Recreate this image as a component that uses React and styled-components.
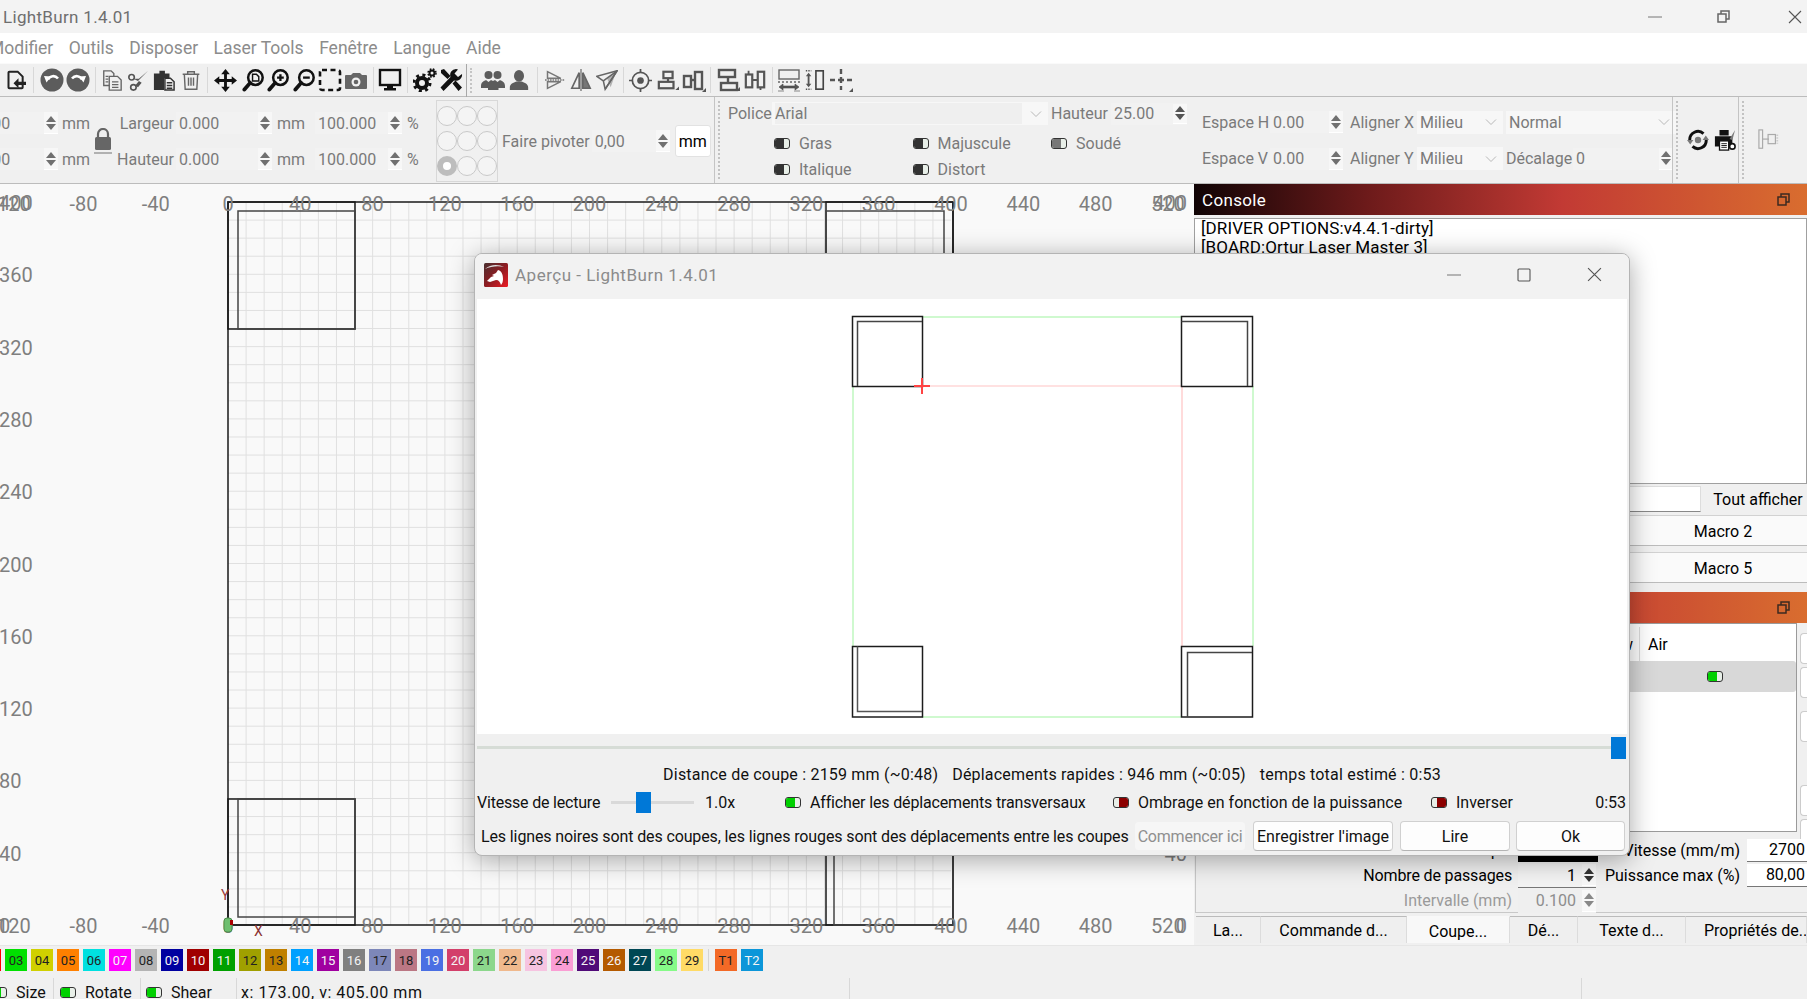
import React from 'react';
import styled, { createGlobalStyle } from 'styled-components';

const FONT = `Roboto, "Liberation Sans", sans-serif`;

const Global = createGlobalStyle`
  html, body { margin: 0; padding: 0; background: #f0f0f0; }
  * { box-sizing: border-box; }
`;

const Root = styled.div`
  position: relative; width: 1807px; height: 999px; overflow: hidden;
  display: flex; flex-direction: column; background: #f0f0f0;
  font-family: ${FONT}; font-size: 16px; color: #000;
`;

/* ---------- Title & menu ---------- */
const TitleBar = styled.div`
  height: 33px; flex: none; display: flex; align-items: center; background: #f3f3f3;
  color: #6e6e6e; padding-left: 3px; font-size: 17px; letter-spacing: .32px;
`;
const TitleText = styled.div`flex: 1;`;
const WinButtons = styled.div`display: flex; align-items: center; color: ${p => p.$color || '#777'};`;
const WinButton = styled.div`
  width: ${p => p.$w}px; margin-left: ${p => p.$ml || 0}px; display: flex; justify-content: center; align-items: center;
`;
const MenuBar = styled.div`
  height: 30px; flex: none; display: flex; align-items: center; gap: 15.5px; background: #fff;
  color: #8c8c8c; overflow: hidden; font-size: 17.5px;
`;
const MenuFirst = styled.span`margin-left: -11px;`;

/* ---------- Toolbar ---------- */
const ToolBar = styled.div`
  height: 34px; flex: none; display: flex; align-items: center; padding-left: 5px;
  background: #f0f0f0; border-bottom: 1px solid #bcbcbc; border-top: 1px solid #fafafa;
`;
const Tool = styled.div`
  width: ${p => p.$w}px; height: 24px; flex: none; display: flex; justify-content: center; align-items: center;
  color: ${p => p.$c || '#111'};
  svg { display: block; }
`;
const ToolSep = styled.div`
  width: ${p => p.$w}px; height: 26px; flex: none; display: flex; justify-content: center;
  &::before { content: ''; width: 1px; background: #d8d8d8; }
`;
const ToolHandle = styled.div`
  width: 17px; height: 33px; flex: none; display: flex; gap: 3px; padding-left: 3px;
  &::before { content: ''; width: 1px; background: #a8a8a8; }
  &::after { content: ''; margin: 4px 0; width: 2px; border-left: 2px dotted #c4c4c4; }
`;

/* ---------- Properties bar ---------- */
const PropBar = styled.div`
  height: 87px; flex: none; display: flex; background: #f0f0f0; border-bottom: 1px solid #bcbcbc;
  color: #7a7a7a; font-size: 16px;
`;
const PropGrid = styled.div`
  width: 714px; flex: none; display: grid; padding-top: 8px; overflow: hidden;
  grid-template-columns: 58px 34px 22px 61px 99px 36px 95px 25px 70px 214px;
  grid-template-rows: 36px 36px;
  align-items: center;
`;
const GridCell = styled.div`
  display: flex; align-items: center; justify-content: ${p => p.$justify || 'flex-start'};
  grid-column: ${p => p.$col}; grid-row: ${p => p.$row};
  padding-left: ${p => p.$pl || 0}px; padding-right: ${p => p.$pr || 0}px;
`;
const Field = styled.div`
  width: ${p => p.$w}px; flex: none; height: 22px; margin-left: ${p => p.$ml || 0}px;
  display: flex; align-items: center; justify-content: space-between;
  background: #f2f2f2; padding-left: 3px; color: #7a7a7a;
`;
const Spin = styled.div`
  width: 14px; height: ${p => p.$h || 22}px; flex: none; display: flex; flex-direction: column; justify-content: center; gap: 2px;
  align-items: center; background: #f7f7f7; border-bottom: 1px solid #fff;
  &::before, &::after { content: ''; width: 0; height: 0; border-left: 5px solid transparent; border-right: 5px solid transparent; }
  &::before { border-bottom: 6px solid ${p => p.$color || '#707070'}; }
  &::after { border-top: 6px solid ${p => p.$color || '#707070'}; }
`;
const RadioBox = styled.div`
  width: 62px; height: 82px; margin-left: 6px; border: 1px solid #d8d8d8; display: grid;
  grid-template-columns: repeat(3, 20px); grid-auto-rows: 20px; row-gap: 5px; padding: 5px 0 0 0; justify-content: center;
`;
const Radio = styled.div`
  width: 20px; height: 20px; border-radius: 50%; background: ${p => (p.$on ? '#fff' : '#f4f4f4')};
  border: ${p => (p.$on ? '6px solid #bdbdbd' : '1px solid #c9c9c9')};
`;
const UnitButton = styled.div`
  width: 36px; height: 32px; margin-left: 5px; background: #fff; border: 1px solid #e2e2e2; border-radius: 3px;
  color: #000; display: flex; align-items: center; justify-content: center;
`;
const GroupSep = styled.div`
  width: 6px; flex: none; border-left: 1px solid #c4c4c4; position: relative;
  &::after { content: ''; display: block; width: 0; height: 78px; margin: 4px 0 0 3px; border-left: 2px dotted #c2c2c2; }
`;
const FontGroup = styled.div`width: 470px; flex: none; padding: 5px 0 0 8px;`;
const FontRow = styled.div`display: flex; align-items: center; height: 23px;`;
const FontLabel = styled.div`width: ${p => p.$w}px; flex: none; margin-left: ${p => p.$ml || 0}px; white-space: nowrap;`;
const Combo = styled.div`
  width: ${p => p.$w}px; height: ${p => p.$h || 23}px; flex: none; margin-left: ${p => p.$ml || 0}px;
  display: flex; align-items: center; justify-content: space-between; padding: 0 6px 0 3px;
  background: #f7f7f7; color: #7a7a7a;
`;
const ComboInner = styled.div`flex: 1; background: #efefef; height: 21px; line-height: 21px; margin-right: 8px;`;
const ToggleGrid = styled.div`
  display: grid; grid-template-columns: repeat(3, 138.5px); grid-auto-rows: 26px; margin: 5px 0 0 46px;
`;
const ToggleLabel = styled.div`display: flex; align-items: center; gap: 9px; white-space: nowrap;`;
const Toggle = styled.span`
  display: inline-flex; flex: none; width: 16px; height: 11px; border-radius: 3px; border: 1px solid #333; overflow: hidden;
  background: #e8efe8;
  flex-direction: ${p => (p.$right ? 'row-reverse' : 'row')};
  &::before { content: ''; width: 9px; background: ${p => p.$fill || '#333'}; }
`;
const SpaceGroup = styled.div`
  width: 482px; flex: none; display: grid; grid-template-rows: 36px 37px; padding: 7px 0 0 12px; align-items: center;
`;
const SpaceRow = styled.div`display: flex; align-items: center;`;
const IconGroup = styled.div`width: 60px; flex: none; display: flex; align-items: center; justify-content: center; gap: 5px; padding-left: 7px;`;
const LastGroup = styled.div`flex: 1; display: flex; align-items: center; padding-left: 13px;`;

/* ---------- Main ---------- */
const Main = styled.div`flex: 1; display: flex; min-height: 0;`;
const CanvasArea = styled.div`
  width: 1194px; flex: none; background: #f9f9f9; overflow: hidden;
  svg { display: block; }
`;
const Dock = styled.div`
  width: 613px; flex: none; display: flex; flex-direction: column; background: #f0f0f0; height: 759px;
`;
const DockHeader = styled.div`
  height: 31px; flex: none; display: flex; align-items: center; justify-content: space-between;
  padding: 0 17px 0 8px; color: #fff; font-size: 17px; letter-spacing: .35px;
  background: linear-gradient(90deg, #100405 0%, #6c1a1a 28%, #c23a34 60%, #d96d2f 100%);
  svg { display: block; }
`;
const Console = styled.div`
  height: 266px; flex: none; margin: 3px 0 2px; background: #fff; border: 1px solid #a0a0a0; padding: 0 6px;
  line-height: 19px; font-size: 17px; letter-spacing: .1px; color: #000;
`;
const SearchRow = styled.div`height: 26px; flex: none; display: flex;`;
const SearchInput = styled.div`flex: 1; background: #fff; border: 1px solid #ddd; border-bottom: 1px solid #888;`;
const SearchButton = styled.div`width: 106px; flex: none; display: flex; align-items: center; justify-content: center; padding-left: 8px; white-space: nowrap;`;
const MacroGrid = styled.div`
  display: grid; grid-template-columns: 1fr 1fr 168px; grid-auto-rows: 31px; row-gap: 6px; margin: 3px 0 9px;
`;
const MacroBtn = styled.div`
  background: #fafafa; border-top: 1px solid #d2d2d2; border-bottom: 1px solid #bcbcbc; padding-top: 1px;
  display: flex; align-items: center; justify-content: center;
`;
const LayerRow = styled.div`height: 209px; flex: none; display: flex;`;
const Table = styled.div`width: 603px; flex: none; background: #fff; border: 1px solid #9a9a9a; display: flex; flex-direction: column;`;
const TableHead = styled.div`height: 37px; flex: none; display: flex; align-items: center; padding-top: 3px;`;
const HeadCell = styled.div`
  flex: ${p => (p.$grow ? 1 : 'none')}; width: ${p => p.$w || 'auto'}; height: 100%; display: flex; align-items: center;
  padding: 0 ${p => (p.$grow ? 6 : 8)}px; justify-content: ${p => (p.$grow ? 'flex-end' : 'flex-start')}; border-right: ${p => (p.$grow ? '1px solid #ddd' : 0)};
`;
const TableRowSel = styled.div`
  height: 31px; flex: none; background: #d8d8d8; border-radius: 3px; display: flex; align-items: center; justify-content: flex-end; padding-right: 73px;
`;
const SideButtons = styled.div`flex: 1; display: flex; flex-direction: column; padding: 10px 0 0 3px;`;
const SideBtn = styled.div`
  height: 31px; flex: none; background: #fff; border: 1px solid #ccc; border-radius: 4px 0 0 4px; border-right: 0;
  margin-top: ${p => p.$mt || 0}px;
`;
const FormGrid = styled.div`
  display: grid; grid-template-columns: 316px 86px 142px 7px 60px; grid-auto-rows: 25px;
  margin: 6px 0 0 1px; border-left: 1px solid #c8c8c8; border-bottom: 1px solid #c8c8c8; height: 75px; align-items: center;
  flex: none;
`;
const FormLabel = styled.div`text-align: right; color: ${p => p.$color || '#000'}; white-space: nowrap; letter-spacing: ${p => p.$ls || 0}px;`;
const FormSpin = styled.div`
  display: flex; align-items: center; justify-content: space-between; height: 24px; margin: 0 2px 0 6px; background: ${p => p.$dim ? '#efefef' : '#f3f3f3'};
  border-bottom: ${p => (p.$dim ? 0 : '1px solid #777')}; color: ${p => (p.$dim ? '#8d8d8d' : '#000')};
`;
const FormValue = styled.span`flex: 1; text-align: right; padding-right: 6px;`;
const ColorBar = styled.div`height: 23px; margin-left: 6px; background: #000;`;
const FormInput = styled.div`
  height: 23px; background: #fff; border-bottom: 1px solid #777; text-align: right; white-space: nowrap; line-height: 22px; padding-right: 2px;
`;
const Tabs = styled.div`display: flex; height: 27px; flex: none; margin: 3px 0 0 2px; background: #f0f0f0;`;
const TabItem = styled.div`
  width: ${p => p.$w}px; flex: none; display: flex; align-items: center; justify-content: ${p => (p.$pl ? 'flex-start' : 'center')};
  background: ${p => (p.$active ? '#f8f8f8' : '#efefef')}; border-right: 1px solid #dcdcdc;
  border-top: 1px solid ${p => (p.$active ? '#f8f8f8' : '#bbb')}; padding-top: ${p => (p.$active ? 2 : 0)}px;
  padding-left: ${p => p.$pl || 0}px;
  white-space: nowrap; overflow: hidden;
`;

/* ---------- Palette & status ---------- */
const Palette = styled.div`
  height: 33px; flex: none; display: flex; align-items: flex-start; gap: 4px; padding-top: 3px; margin-left: -21px;
  background: #f0f0f0; border-top: 1px solid #e6e6e6;
`;
const Swatch = styled.div`
  width: 22px; height: 22px; flex: none; display: flex; align-items: center; justify-content: center; font-size: 13px;
  background: ${p => p.$bg}; color: ${p => (p.$light ? '#f4f4f4' : '#222')};
`;
const PaletteSep = styled.div`width: 1px; height: 22px; flex: none; background: #d4d4d4; margin: 0 2px 0 1px;`;
const StatusBar = styled.div`
  height: 21px; flex: none; overflow: hidden; display: flex; padding-top: 5px; background: #f0f0f0; color: #111;
`;
const StatusItem = styled.div`
  width: ${p => p.$w}px; flex: none; display: flex; align-items: flex-start; gap: 9px; padding-left: ${p => p.$pl || 0}px; white-space: nowrap;
  border-right: 1px solid #d8d8d8; height: 40px; margin-top: -5px; padding-top: 5px; margin-left: ${p => p.$ml || 0}px;
  letter-spacing: ${p => p.$ls || 0}px;
  & > span:first-child { margin-top: 4px; }
`;

/* ---------- Dialog ---------- */
const Dialog = styled.div`
  position: absolute; left: 474px; top: 253px; width: 1156px; height: 603px;
  background: #f0f0f0; border: 1px solid #b4b4b4; border-radius: 8px; padding: 0 2px;
  display: flex; flex-direction: column; overflow: hidden; color: #111;
  box-shadow: 0 4px 26px rgba(0,0,0,.34);
`;
const DialogTitle = styled.div`
  height: 45px; flex: none; display: flex; align-items: center; padding: 0 0 4px 9px; gap: 7px; background: #f2f2f2;
  color: #8b8b8b; font-size: 17px; margin: 0 -2px; letter-spacing: .5px;
`;
const DialogTitleText = styled.div`flex: 1;`;
const Preview = styled.div`
  height: 435px; flex: none; background: #fff; svg { display: block; }
`;
const TrackRow = styled.div`height: 27px; flex: none; display: flex; align-items: center; padding-right: 1px;`;
const TrackLine = styled.div`flex: 1; height: 3px; background: #d6dcd6;`;
const BlueHandle = styled.div`width: 15px; height: 22px; background: #0078d7; flex: none;`;
const InfoRow = styled.div`height: 27px; flex: none; display: flex; align-items: center; justify-content: center; gap: 14px; white-space: nowrap; letter-spacing: .2px;`;
const ControlRow = styled.div`height: 28px; flex: none; display: flex; align-items: center; white-space: nowrap;`;
const ControlCell = styled.div`
  width: ${p => p.$w}px; flex: none; display: flex; align-items: center; gap: 9px; letter-spacing: ${p => p.$ls || 0}px;
`;
const ControlEnd = styled.div`flex: 1; text-align: right; padding-right: 1px;`;
const Slider = styled.div`
  position: relative; width: 83px; height: 21px; flex: none; margin-right: 11px;
  &::before { content: ''; position: absolute; left: 0; right: 0; top: 9px; height: 3px; background: #d9d9d9; }
`;
const SliderHandle = styled.div`position: absolute; left: 25px; top: 0; width: 15px; height: 21px; background: #0078d7;`;
const ButtonRow = styled.div`height: 30px; flex: none; margin-top: 5px; display: flex; align-items: center; white-space: nowrap;`;
const Hint = styled.div`width: 657px; flex: none; padding-left: 4px; letter-spacing: -.12px; overflow: hidden;`;
const Btn = styled.div`
  width: ${p => p.$w}px; height: 30px; flex: none; margin-right: ${p => p.$mr || 0}px; display: flex; align-items: center; justify-content: center;
  letter-spacing: ${p => p.$ls || 0}px;
  background: ${p => (p.$disabled ? '#f6f6f6' : '#fdfdfd')}; border: 1px solid ${p => (p.$disabled ? '#f0f0f0' : '#d0d0d0')};
  border-bottom-color: ${p => (p.$disabled ? '#f0f0f0' : '#b4b4b4')}; border-radius: 4px; color: ${p => (p.$disabled ? '#8f8f8f' : '#111')};
`;

/* ---------- Icons ---------- */
const S = ({ children, w = 22, h = 22, vb = '0 0 24 24' }) => (
  <svg width={w} height={h} viewBox={vb} fill="currentColor" stroke="none">{children}</svg>
);
const lens = (inner) => (
  <S w={23} h={24}>
    <circle cx="14" cy="9.5" r="7.6" fill="none" stroke="currentColor" strokeWidth="2.6" />
    <path d="M8.5 15L2.5 22" stroke="currentColor" strokeWidth="4" strokeLinecap="round" />
    {inner}
  </S>
);
const Icons = {
  file: <S w={20} h={24}><path d="M4 2h10l6 6v13a1 1 0 0 1-1 1H4a1 1 0 0 1-1-1V3a1 1 0 0 1 1-1z" fill="none" stroke="currentColor" strokeWidth="2.4" /><path d="M24 14h-9v-4l-6 6 6 6v-4h9z" /></S>,
  undo: <S w={24} h={24}><circle cx="12" cy="12" r="11.5" fill="#5c5c5c" /><path d="M8 11.5c2-4 7-4.5 10-1" fill="none" stroke="#fff" strokeWidth="2.6" /><path d="M4 8l7 .5-4.5 6z" fill="#fff" /></S>,
  redo: <S w={24} h={24}><circle cx="12" cy="12" r="11.5" fill="#5c5c5c" /><path d="M16 11.5c-2-4-7-4.5-10-1" fill="none" stroke="#fff" strokeWidth="2.6" /><path d="M20 8l-7 .5 4.5 6z" fill="#fff" /></S>,
  copy: <S w={22} h={24}><g fill="none" stroke="currentColor" strokeWidth="1.5"><path d="M3 2h8l3 3v13H3z" /><path d="M9 8h9l4 4v11H9z" fill="#f0f0f0" /><path d="M5 8h3M5 11h3M5 14h3M12 14h7M12 17h7M12 20h7" /></g></S>,
  cut: <S w={22} h={24}><circle cx="5" cy="9" r="3" fill="none" stroke="currentColor" strokeWidth="1.8" /><circle cx="7" cy="20" r="3" fill="none" stroke="currentColor" strokeWidth="1.8" /><path d="M7 10.5l5 2.5L23 2 13 10.5zM9 18l4-5 3 2-4 5z" /></S>,
  paste: <S w={22} h={24}><path d="M1 5h6V2h6v3h5v5h-6v13H1z" fill="#333" /><path d="M13 10h6l4 4v9H13z" fill="none" stroke="#333" strokeWidth="1.6" /><path d="M15 15h6M15 18h6M15 21h6" stroke="#333" strokeWidth="1.4" /></S>,
  trash: <S w={20} h={24}><g fill="none" stroke="currentColor" strokeWidth="1.7"><path d="M2 5h20M8 5V2h8v3" /><path d="M4 5l1 18h14l1-18" /><path d="M9 9v10M12 9v10M15 9v10" /></g></S>,
  move: <S w={23} h={23}><path d="M12 0l4.5 5.5H13.5V10.5H18.5V7.5L24 12l-5.5 4.500V13.500H13.500V18.500H16.500L12 24 7.500 18.500H10.500V13.500H5.500V16.500L0 12 5.500 7.500V10.500H10.500V5.500H7.500z" /></S>,
  zoomDoc: lens(<path d="M11 6h4l2.500 2.500V13H11z" fill="none" stroke="currentColor" strokeWidth="1.500" />),
  zoomIn: lens(<path d="M10.500 9.500h7M14 6v7" stroke="currentColor" strokeWidth="2.400" />),
  zoomOut: lens(<path d="M10.500 9.500h7" stroke="currentColor" strokeWidth="2.400" />),
  dashed: <S w={24} h={24}><rect x="2" y="2" width="20" height="20" rx="2" fill="none" stroke="currentColor" strokeWidth="2.600" strokeDasharray="5 3.500" /></S>,
  camera: <S w={24} h={24}><path d="M2 7h5l2-2h7l2 2h4a1 1 0 0 1 1 1v12a1 1 0 0 1-1 1H2a1 1 0 0 1-1-1V8a1 1 0 0 1 1-1z" /><circle cx="12" cy="14" r="4.500" fill="#f0f0f0" /><circle cx="12" cy="14" r="2.300" fill="currentColor" /></S>,
  monitor: <S w={24} h={24}><rect x="2" y="2" width="20" height="15" fill="none" stroke="currentColor" strokeWidth="2.400" /><path d="M9 17h6v3h3v2.500H6V20h3z" /></S>,
  gears: <S w={24} h={24}><circle cx="9" cy="15" r="5" fill="none" stroke="currentColor" strokeWidth="4" /><circle cx="9" cy="15" r="8" fill="none" stroke="currentColor" strokeWidth="3" strokeDasharray="3 3.300" /><circle cx="19" cy="5" r="2.500" fill="none" stroke="currentColor" strokeWidth="2" /><circle cx="19" cy="5" r="4" fill="none" stroke="currentColor" strokeWidth="1.500" strokeDasharray="1.700 1.500" /></S>,
  wrench: <S w={24} h={24}><path d="M17 1a6 6 0 0 0-5.500 8L1.500 19.500 4.500 23 15 12.500A6 6 0 0 0 23 6l-4 3-3.500-3.500L19 1.500a6 6 0 0 0-2-.5z" /><path d="M2 2l3-1 6.500 7-3 3L2 5zM13.500 15.500l3-3L23 19.500 19.500 23z" /></S>,
  group: <S w={24} h={24}><circle cx="7.500" cy="7" r="4" /><circle cx="16.500" cy="7" r="4" /><path d="M0 18c0-4 3-5 5-6l2.500 2 2.500-2 2 1 2-1 2.500 2 2.500-2c2 1 5 2 5 6v2h-6.500v2H7v-2H0z" /></S>,
  person: <S w={22} h={24}><ellipse cx="12" cy="7.500" rx="5.500" ry="6.500" /><path d="M2 23v-3c0-4 4-5 7-6.500h6c3 1.500 7 2.500 7 6.500v3z" /></S>,
  mirror: <S w={20} h={24}><g fill="none" stroke="currentColor" strokeWidth="1.800"><path d="M3 2l16 8L3 10z" /><path d="M3 14l16 0L3 22z" /></g><path d="M0 12h24" stroke="currentColor" strokeWidth="2" strokeDasharray="2 1" /></S>,
  flip: <S w={22} h={24}><g fill="none" stroke="currentColor" strokeWidth="1.800"><path d="M10 4L2 21h8z" /><path d="M14 4l8 17h-8z" fill="#777" /></g><path d="M12 0v24" stroke="currentColor" strokeWidth="1.300" /></S>,
  paper: <S w={22} h={24}><g fill="none" stroke="currentColor" strokeWidth="1.700"><path d="M23 2L1 8l7 5 2 9z" /><path d="M23 2L8 13M23 2L10 22" /></g><path d="M12 10l10-7-6 17z" opacity=".45" /></S>,
  target: <S w={23} h={23}><circle cx="12" cy="12" r="8.500" fill="none" stroke="currentColor" strokeWidth="1.800" /><circle cx="12" cy="12" r="3.500" /><path d="M12 0v4M12 20v4M0 12h4M20 12h4" stroke="currentColor" strokeWidth="1.800" /></S>,
  alignH: <S w={22} h={24}><g fill="none" stroke="currentColor" strokeWidth="2.400"><rect x="7" y="3" width="10" height="7" /><rect x="2" y="14" width="16" height="7" /><path d="M12 10v4" /></g><path d="M20 23l4-4v4z" /></S>,
  alignV: <S w={24} h={24}><g fill="none" stroke="currentColor" strokeWidth="2.400"><rect x="2" y="8" width="7" height="11" /><rect x="13" y="4" width="7" height="17" /><path d="M9 12h4" /></g><path d="M20 24l4-4v4z" /></S>,
  distH: <S w={24} h={24}><g fill="none" stroke="currentColor" strokeWidth="2.400"><rect x="3" y="2" width="16" height="7" /><rect x="5" y="15" width="16" height="7" /></g><path d="M12 9v6" stroke="currentColor" strokeWidth="2.400" /><path d="M20 23l4-4v4z" /></S>,
  distV: <S w={22} h={24}><g fill="none" stroke="currentColor" strokeWidth="2.400"><rect x="2" y="6" width="7" height="14" /><rect x="15" y="3" width="7" height="17" /></g><path d="M9 12h6M5 2v4M18 20v3" stroke="currentColor" strokeWidth="2" /></S>,
  sameW: <S w={24} h={24}><rect x="2" y="2" width="20" height="9" fill="none" stroke="#666" strokeWidth="1.400" /><path d="M1 14h22" stroke="#666" strokeWidth="1.400" strokeDasharray="2 2" /><path d="M2 19l4-3v2h12v-2l4 3-4 3v-2H6v2zM1 23h6M17 23h6" stroke="#444" strokeWidth=".6" /></S>,
  sameH: <S w={22} h={24}><path d="M2 2h6M2 22h6" stroke="#555" strokeWidth="1.600" strokeDasharray="1.500 1.200" /><path d="M5 4l3 4H6v8h2l-3 4-3-4h2V8H2z" /><rect x="13" y="2" width="8" height="20" fill="none" stroke="#444" strokeWidth="1.800" /></S>,
  cross: <S w={24} h={24}><path d="M12 1v5M12 9v6M12 18v4M1 12h5M9 12h6M18 12h5" stroke="currentColor" strokeWidth="2.400" /><path d="M20 24l4-4v4z" /></S>,
  sync: <S w={22} h={22}><path d="M3 12a9 9 0 0 1 15-7M21 12a9 9 0 0 1-15 7" fill="none" stroke="#111" strokeWidth="3.200" /><path d="M24 12h-7l3.500-5zM0 12h7l-3.500 5z" /><circle cx="12" cy="12" r="3.500" /></S>,
  printer: <S w={22} h={22}><path d="M6 1h10v6H6zM1 8h19v11H1z" fill="#111" /><rect x="6" y="13" width="10" height="10" fill="#fff" stroke="#111" strokeWidth="1.400" /><path d="M8 16h6M8 18h6M8 20h6" stroke="#111" /><path d="M23 1l-3 11-3-1z" /><circle cx="20" cy="19" r="3" fill="#fff" stroke="#111" strokeWidth="1.800" /></S>,
  handle: <S w={24} h={22}><rect x="1" y="1" width="4" height="20" fill="none" stroke="#aaa" strokeWidth="1.300" /><path d="M5 11h7" stroke="#aaa" strokeWidth="1.300" /><rect x="11" y="6" width="8" height="10" fill="none" stroke="#aaa" strokeWidth="1.300" /><path d="M21 6v10" stroke="#ccc" strokeWidth="2" strokeDasharray="1.500 1.500" /></S>,
};

const Restore = ({ color = '#444', size = 13 }) => (
  <svg width={size} height={size} viewBox="0 0 13 13" fill="none" stroke={color} strokeWidth="1.500">
    <rect x="1" y="4" width="8" height="8" />
    <path d="M4 4V1h8v8H9" />
  </svg>
);
const Lock = () => (
  <svg width="20" height="26" viewBox="0 0 20 26">
    <path d="M5 9V6a5 5 0 0 1 10 0v3" fill="none" stroke="#666" strokeWidth="2.200" />
    <rect x="2" y="9" width="16" height="13" rx="1.500" fill="#666" />
    <path d="M1 25h18" stroke="#888" strokeWidth="1.200" />
  </svg>
);
const Logo = () => (
  <svg width="24" height="24" viewBox="0 0 24 24">
    <defs>
      <linearGradient id="lg" x1="0" y1="0" x2="1" y2="1">
        <stop offset="0" stopColor="#4a3030" />
        <stop offset=".5" stopColor="#8c1c22" />
        <stop offset="1" stopColor="#ee1c25" />
      </linearGradient>
    </defs>
    <rect width="24" height="24" rx="1.500" fill="url(#lg)" />
    <path d="M1 6C6 1 15 1 20 4 15 2.500 7 3 1 6z" fill="#ddd" />
    <path d="M3 18l4-4 3-1-2-1 4-2 2-3c4 1 5 5 5 9 0 3-1 5-2 6-1-3-2-5-5-5l-3 1-3 1z" fill="#fff" />
  </svg>
);

/* ---------- Data ---------- */
const tools = [
  ['i', 'file', 22, '#222'], ['s', 12],
  ['i', 'undo', 25], ['i', 'redo', 28], ['s', 6],
  ['i', 'copy', 27, '#666'], ['i', 'cut', 26, '#555'], ['i', 'paste', 26, '#333'], ['i', 'trash', 27, '#666'], ['s', 6],
  ['i', 'move', 30], ['i', 'zoomDoc', 26], ['i', 'zoomIn', 25], ['i', 'zoomOut', 26], ['i', 'dashed', 25], ['i', 'camera', 27, '#666'], ['s', 8],
  ['i', 'monitor', 26], ['s', 8], ['i', 'gears', 28], ['i', 'wrench', 24], ['h'],
  ['i', 'group', 26, '#5c5c5c'], ['i', 'person', 26, '#5c5c5c'], ['s', 10],
  ['i', 'mirror', 26, '#777'], ['i', 'flip', 25, '#666'], ['i', 'paper', 27, '#666'], ['s', 6],
  ['i', 'target', 29, '#555'], ['i', 'alignH', 26, '#555'], ['i', 'alignV', 25, '#555'], ['s', 8],
  ['i', 'distH', 28, '#555'], ['i', 'distV', 26, '#555'], ['s', 8],
  ['i', 'sameW', 26, '#555'], ['i', 'sameH', 26, '#555'], ['i', 'cross', 26, '#555'],
];

const swatches = [
  ['02', '#ff0000', 1], ['03', '#00e000'], ['04', '#d0d000'], ['05', '#ff8000'], ['06', '#00e0e0'], ['07', '#ff00ff', 1],
  ['08', '#b4b4b4'], ['09', '#0000a0', 1], ['10', '#a00000', 1], ['11', '#00a000', 1], ['12', '#a0a000'], ['13', '#c08000'],
  ['14', '#00a0ff', 1], ['15', '#a000a0', 1], ['16', '#808080', 1], ['17', '#7d87b9'], ['18', '#bb7784'], ['19', '#4a6fe3', 1],
  ['20', '#d33f6a', 1], ['21', '#8cd78c'], ['22', '#f0b98d'], ['23', '#f6c4e1'], ['24', '#fa9ed4'], ['25', '#500a78', 1],
  ['26', '#b45a00', 1], ['27', '#004754', 1], ['28', '#86fa88'], ['29', '#ffdb66'],
];

const OX = 228, OY = 925, K = 1.8075;
const xp = v => OX + v * K;
const yp = v => OY - v * K;
const range = (a, b, s) => { const r = []; for (let v = a; v <= b; v += s) r.push(v); return r; };

const RulerText = styled.text`
  font-family: ${FONT}; font-size: 20px; fill: #7f7f7f;
`;

const CanvasDrawing = () => (
  <svg width="1194" height="761" viewBox="0 184 1194 761">
    <g stroke="#e0e0e0" strokeWidth="1">
      {range(10, 390, 10).map(v => <line key={v} x1={xp(v)} x2={xp(v)} y1={OY} y2={yp(400)} />)}
      {range(10, 390, 10).map(v => <line key={v} y1={yp(v)} y2={yp(v)} x1={OX} x2={xp(400)} />)}
    </g>
    <g fill="none" stroke="#1a1a1a" strokeWidth="1.500">
      <path d={`M${OX} ${OY}V202H953M${OX} ${OY}H953V202`} />
      <rect x="228" y="202" width="127" height="127" />
      <rect x="238" y="211" width="117" height="118" stroke="#444" />
      <rect x="826" y="202" width="127" height="127" />
      <rect x="826" y="211" width="118" height="118" stroke="#444" />
      <rect x="228" y="799" width="127" height="126" />
      <rect x="238" y="799" width="117" height="118" stroke="#444" />
      <rect x="826" y="799" width="127" height="126" />
      <rect x="834" y="805" width="119" height="120" stroke="#444" />
    </g>
    {range(-120, 520, 40).map(v => (
      <React.Fragment key={v}>
        <RulerText x={xp(v)} y="211" textAnchor="middle">{v}</RulerText>
        <RulerText x={xp(v)} y="933" textAnchor="middle">{v}</RulerText>
      </React.Fragment>
    ))}
    {range(0, 400, 40).map(v => (
      <React.Fragment key={v}>
        <RulerText x="-1" y={yp(v) + 8} textAnchor="start">{v}</RulerText>
        <RulerText x="1187" y={yp(v) + 8} textAnchor="end">{v}</RulerText>
      </React.Fragment>
    ))}
    <rect x="224" y="918" width="8" height="14" rx="3" fill="#6fbf6f" stroke="#4c8c4c" />
    <rect x="230" y="920" width="3" height="5" fill="#a00" />
    <text x="221" y="900" fontFamily={FONT} fontSize="14" fill="#9a3a3a">Y</text>
    <text x="254" y="936" fontFamily={FONT} fontSize="14" fill="#8a3030">X</text>
  </svg>
);

const PreviewDrawing = () => (
  <svg width="1150" height="435" viewBox="477 299 1150 435">
    <g fill="none" stroke="#c0f7c0" strokeWidth="1.500">
      <path d="M922 317H1181M853 386V646M922 717H1181M1253 386V646" />
    </g>
    <g fill="none" stroke="#ffc4c4" strokeWidth="1.200">
      <path d="M922 386H1181M1182 386V646" />
    </g>
    <g fill="none" stroke="#1c1c1c" strokeWidth="1.500">
      <rect x="852.500" y="316.500" width="70" height="70" />
      <path d="M857.500 386V321.500H922" stroke="#444" />
      <rect x="1181.500" y="316.500" width="71" height="70" />
      <path d="M1181.500 321.500H1247.500V386" stroke="#444" />
      <rect x="852.500" y="646.500" width="70" height="70.500" />
      <path d="M857.500 646.500V711.500H922" stroke="#555" />
      <rect x="1181.500" y="646.500" width="71" height="70.500" />
      <path d="M1187.500 717V652.500H1252" stroke="#444" />
    </g>
    <path d="M922 378V394M914 386H930" stroke="#ff4444" strokeWidth="2" />
  </svg>
);

const Sp = ({ h, c }) => <Spin $h={h} $color={c} />;
const WinClose = ({ size = 14, color = '#555' }) => (
  <svg width={size} height={size} viewBox="0 0 14 14" stroke={color} strokeWidth="1.100"><path d="M1 1l12 12M13 1L1 13" /></svg>
);
const WinMin = ({ color = '#777' }) => (
  <svg width="14" height="14" viewBox="0 0 14 14" stroke={color} strokeWidth="1"><path d="M0 7h14" /></svg>
);
const WinMax = ({ color = '#555' }) => (
  <svg width="14" height="14" viewBox="0 0 14 14" fill="none" stroke={color} strokeWidth="1.100"><rect x="1" y="1" width="12" height="12" rx="1" /></svg>
);
const Chevron = () => (
  <svg width="12" height="8" viewBox="0 0 12 8" fill="none" stroke="#b8b8b8" strokeWidth="1"><path d="M1 1.500l5 5 5-5" /></svg>
);

const SizeRow = ({ row, label }) => (
  <>
    <GridCell $col={1} $row={row}><Field $w={91} $ml={-33}>0.000<Sp /></Field></GridCell>
    <GridCell $col={2} $row={row} $pl={4}>mm</GridCell>
    <GridCell $col={4} $row={row} $justify="flex-end" $pr={1}>{label}</GridCell>
    <GridCell $col={5} $row={row}><Field $w={96} $ml={1}>0.000<Sp /></Field></GridCell>
    <GridCell $col={6} $row={row} $pl={3}>mm</GridCell>
    <GridCell $col={7} $row={row} $pl={5}><Field $w={87}>100.000<Sp /></Field></GridCell>
    <GridCell $col={8} $row={row} $pl={2}>%</GridCell>
  </>
);

export default function App() {
  return (
    <Root>
      <Global />
      <TitleBar>
        <TitleText>LightBurn 1.4.01</TitleText>
        <WinButtons>
          <WinButton $w={68}><WinMin /></WinButton>
          <WinButton $w={68}><Restore color="#666" /></WinButton>
          <WinButton $w={24} $ml={26}><WinClose /></WinButton>
        </WinButtons>
      </TitleBar>
      <MenuBar>
        <MenuFirst>Modifier</MenuFirst>
        <span>Outils</span><span>Disposer</span><span>Laser Tools</span><span>Fenêtre</span><span>Langue</span><span>Aide</span>
      </MenuBar>
      <ToolBar>
        {tools.map((t, i) => {
          if (t[0] === 's') return <ToolSep key={i} $w={t[1]} />;
          if (t[0] === 'h') return <ToolHandle key={i} />;
          return <Tool key={i} $w={t[2]} $c={t[3]}>{Icons[t[1]]}</Tool>;
        })}
      </ToolBar>
      <PropBar>
        <PropGrid>
          <SizeRow row={1} label="Largeur" />
          <SizeRow row={2} label="Hauteur" />
          <GridCell $col={3} $row="1 / span 2" $justify="center"><Lock /></GridCell>
          <GridCell $col={9} $row="1 / span 2">
            <RadioBox>
              {[0, 1, 2, 3, 4, 5, 6, 7, 8].map(i => <Radio key={i} $on={i === 6} />)}
            </RadioBox>
          </GridCell>
          <GridCell $col={10} $row="1 / span 2" $pl={2}>
            Faire pivoter
            <Field $w={78} $ml={2}>0,00<Sp /></Field>
            <UnitButton>mm</UnitButton>
          </GridCell>
        </PropGrid>
        <GroupSep />
        <FontGroup>
          <FontRow>
            <FontLabel $w={44}>Police</FontLabel>
            <Combo $w={276}><ComboInner>Arial</ComboInner><Chevron /></Combo>
            <FontLabel $w={60} $ml={3}>Hauteur</FontLabel>
            <Field $w={76}>25.00<Sp h={20} c="#555" /></Field>
          </FontRow>
          <ToggleGrid>
            <ToggleLabel><Toggle />Gras</ToggleLabel>
            <ToggleLabel><Toggle />Majuscule</ToggleLabel>
            <ToggleLabel><Toggle $fill="#777" />Soudé</ToggleLabel>
            <ToggleLabel><Toggle />Italique</ToggleLabel>
            <ToggleLabel><Toggle />Distort</ToggleLabel>
          </ToggleGrid>
        </FontGroup>
        <SpaceGroup>
          <SpaceRow>
            <FontLabel $w={68}>Espace H</FontLabel>
            <Field $w={73}>0.00<Sp /></Field>
            <FontLabel $w={67} $ml={7}>Aligner X</FontLabel>
            <Combo $w={86}>Milieu<Chevron /></Combo>
            <Combo $w={170} $ml={3}>Normal<Chevron /></Combo>
          </SpaceRow>
          <SpaceRow>
            <FontLabel $w={68}>Espace V</FontLabel>
            <Field $w={73}>0.00<Sp /></Field>
            <FontLabel $w={67} $ml={7}>Aligner Y</FontLabel>
            <Combo $w={86}>Milieu<Chevron /></Combo>
            <FontLabel $w={67} $ml={3}>Décalage</FontLabel>
            <Field $w={100}>0<Sp /></Field>
          </SpaceRow>
        </SpaceGroup>
        <GroupSep />
        <IconGroup>{Icons.sync}{Icons.printer}</IconGroup>
        <GroupSep />
        <LastGroup>{Icons.handle}</LastGroup>
      </PropBar>
      <Main>
        <CanvasArea><CanvasDrawing /></CanvasArea>
        <Dock>
          <DockHeader>Console<Restore color="#3c2a20" /></DockHeader>
          <Console>[DRIVER OPTIONS:v4.4.1-dirty]<br />[BOARD:Ortur Laser Master 3]</Console>
          <SearchRow><SearchInput /><SearchButton>Tout afficher</SearchButton></SearchRow>
          <MacroGrid>
            <MacroBtn>Macro 0</MacroBtn><MacroBtn>Macro 1</MacroBtn><MacroBtn>Macro 2</MacroBtn>
            <MacroBtn>Macro 3</MacroBtn><MacroBtn>Macro 4</MacroBtn><MacroBtn>Macro 5</MacroBtn>
          </MacroGrid>
          <DockHeader>Coupes / Calques<Restore color="#3c2a20" /></DockHeader>
          <LayerRow>
            <Table>
              <TableHead>
                <HeadCell $grow>Show</HeadCell>
                <HeadCell $w="156px">Air</HeadCell>
              </TableHead>
              <TableRowSel><Toggle $fill="#00d000" /></TableRowSel>
            </Table>
            <SideButtons>
              <SideBtn />
              <SideBtn $mt={3} />
              <SideBtn $mt={13} />
              <SideBtn $mt={43} />
              <SideBtn $mt={3} />
            </SideButtons>
          </LayerRow>
          <FormGrid>
            <FormLabel>Couleur de calque</FormLabel>
            <ColorBar />
            <FormLabel>Vitesse (mm/m)</FormLabel>
            <span />
            <FormInput>2700</FormInput>
            <FormLabel $ls={-.15}>Nombre de passages</FormLabel>
            <FormSpin><FormValue>1</FormValue><Sp h={22} c="#333" /></FormSpin>
            <FormLabel>Puissance max (%)</FormLabel>
            <span />
            <FormInput>80,00</FormInput>
            <FormLabel $color="#9a9a9a">Intervalle (mm)</FormLabel>
            <FormSpin $dim><FormValue>0.100</FormValue><Sp h={22} c="#888" /></FormSpin>
          </FormGrid>
          <Tabs>
            <TabItem $w={65}>La...</TabItem>
            <TabItem $w={146}>Commande d...</TabItem>
            <TabItem $w={103} $active>Coupe...</TabItem>
            <TabItem $w={68}>Dé...</TabItem>
            <TabItem $w={108}>Texte d...</TabItem>
            <TabItem $w={121} $pl={18}>Propriétés de...</TabItem>
          </Tabs>
        </Dock>
      </Main>
      <Palette>
        {swatches.map(([n, c, l]) => <Swatch key={n} $bg={c} $light={l}>{n}</Swatch>)}
        <PaletteSep />
        <Swatch $bg="#f36926">T1</Swatch>
        <Swatch $bg="#0c96d9" $light>T2</Swatch>
      </Palette>
      <StatusBar>
        <StatusItem $w={63} $ml={-9}><Toggle $fill="#00d000" />Size</StatusItem>
        <StatusItem $w={87} $pl={6}><Toggle $fill="#00d000" />Rotate</StatusItem>
        <StatusItem $w={96} $pl={5}><Toggle $fill="#00d000" />Shear</StatusItem>
        <StatusItem $w={613} $pl={4} $ls={.55}>x: 173.00, v: 405.00 mm</StatusItem>
        <StatusItem $w={732} />
      </StatusBar>

      <Dialog>
        <DialogTitle>
          <Logo />
          <DialogTitleText>Aperçu - LightBurn 1.4.01</DialogTitleText>
          <WinButtons>
            <WinButton $w={70}><WinMin /></WinButton>
            <WinButton $w={70}><WinMax /></WinButton>
            <WinButton $w={70}><WinClose size={15} /></WinButton>
          </WinButtons>
        </DialogTitle>
        <Preview><PreviewDrawing /></Preview>
        <TrackRow><TrackLine /><BlueHandle /></TrackRow>
        <InfoRow>
          <span>Distance de coupe : 2159 mm (~0:48)</span>
          <span>Déplacements rapides : 946 mm (~0:05)</span>
          <span>temps total estimé : 0:53</span>
        </InfoRow>
        <ControlRow>
          <ControlCell $w={134} $ls={-.2}>Vitesse de lecture</ControlCell>
          <Slider><SliderHandle /></Slider>
          <ControlCell $w={80}>1.0x</ControlCell>
          <ControlCell $w={328} $ls={-.15}><Toggle $fill="#00d000" />Afficher les déplacements transversaux</ControlCell>
          <ControlCell $w={318}><Toggle $right $fill="#8c0000" />Ombrage en fonction de la puissance</ControlCell>
          <ControlCell $w={100}><Toggle $right $fill="#8c0000" />Inverser</ControlCell>
          <ControlEnd>0:53</ControlEnd>
        </ControlRow>
        <ButtonRow>
          <Hint>Les lignes noires sont des coupes, les lignes rouges sont des déplacements entre les coupes</Hint>
          <Btn $w={112} $mr={7} $disabled $ls={-.2}>Commencer ici</Btn>
          <Btn $w={140} $mr={7}>Enregistrer l'image</Btn>
          <Btn $w={110} $mr={6}>Lire</Btn>
          <Btn $w={109}>Ok</Btn>
        </ButtonRow>
      </Dialog>
    </Root>
  );
}
